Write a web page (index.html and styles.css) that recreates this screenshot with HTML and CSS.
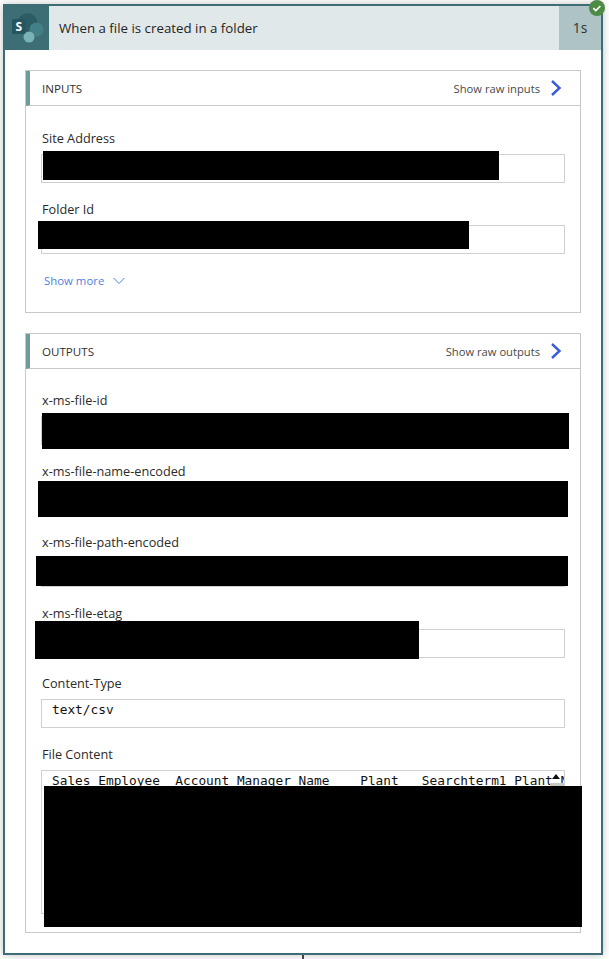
FILE: index.html
```html
<!DOCTYPE html>
<html lang="en">
<head>
<meta charset="utf-8">
<title>When a file is created in a folder</title>
<link rel="stylesheet" href="styles.css">
</head>
<body>
<main class="card">
  <header class="card-head">
    <div class="logo-box">
      <svg class="logo" width="44" height="44" viewBox="0 0 44 44">
        <circle cx="22.500" cy="17" r="10" fill="#2c5c64"/>
        <circle cx="31.500" cy="23.500" r="7" fill="#437f87"/>
        <circle cx="24" cy="31" r="5.500" fill="#79b2b9"/>
        <rect x="7" y="13" width="13.5" height="15" rx="1.5" fill="#235660"/>
        <text x="13.700" y="25" class="logo-s">S</text>
      </svg>
    </div>
    <div class="card-title">When a file is created in a folder</div>
    <div class="duration">1s</div>
  </header>
  <svg class="badge" width="18" height="18" viewBox="0 0 18 18">
    <circle cx="9" cy="8" r="8" fill="#4c8a46"/>
    <path d="M5.3 8.2l2.5 2.4 4.6-4.6" fill="none" stroke="#fff" stroke-width="1.6"/>
  </svg>
  <div class="card-body">
    <section class="panel panel-inputs">
      <div class="panel-head">
        <span class="panel-title">INPUTS</span>
        <a class="raw-link">Show raw inputs
          <svg class="raw-chevron" width="12" height="16" viewBox="0 0 12 16"><path d="M2 1l7.500 7L2 15" fill="none" stroke="#3b5bdb" stroke-width="2.400"/></svg>
        </a>
      </div>
      <div class="panel-body">
        <div class="field"><label>Site Address</label><div class="value"></div></div>
        <div class="field"><label>Folder Id</label><div class="value"></div></div>
        <a class="show-more">Show more
          <svg width="12" height="8" viewBox="0 0 12 8"><path d="M.5 1l5.5 5.5L11.500 1" fill="none" stroke="#4f7fe0" stroke-width="1"/></svg>
        </a>
      </div>
    </section>
    <section class="panel panel-outputs">
      <div class="panel-head">
        <span class="panel-title">OUTPUTS</span>
        <a class="raw-link">Show raw outputs
          <svg class="raw-chevron" width="12" height="16" viewBox="0 0 12 16"><path d="M2 1l7.500 7L2 15" fill="none" stroke="#3b5bdb" stroke-width="2.400"/></svg>
        </a>
      </div>
      <div class="panel-body">
        <div class="field"><label>x-ms-file-id</label><div class="value"></div></div>
        <div class="field"><label>x-ms-file-name-encoded</label><div class="value"></div></div>
        <div class="field"><label>x-ms-file-path-encoded</label><div class="value"></div></div>
        <div class="field field-short"><label>x-ms-file-etag</label><div class="value"></div></div>
        <div class="field"><label>Content-Type</label><div class="value mono">text/csv</div></div>
        <div class="field"><label>File Content</label>
          <div class="value mono value-tall">Sales Employee  Account Manager Name    Plant   Searchterm1 Plant Name
            <span class="scroll-thumb"></span><span class="scroll-arrow"></span>
          </div>
        </div>
      </div>
    </section>
  </div>
</main>
<div class="connector"></div>
<div class="redact r1"></div>
<div class="redact r2"></div>
<div class="redact r3"></div>
<div class="redact r4"></div>
<div class="redact r5"></div>
<div class="redact r6"></div>
<div class="redact r7"></div>
</body>
</html>
```
FILE: styles.css
```css
* { box-sizing: border-box; }
html, body { margin: 0; padding: 0; background: #fff; overflow: hidden; }
body {
  position: relative;
  width: 609px;
  height: 959px;
  font-family: "Open Sans", "Noto Sans", sans-serif;
  color: #323130;
}
.card {
  position: relative;
  margin: 4px 6px 0 3px;
  width: 600px;
  height: 951px;
  border: 2px solid #3d6e76;
  background: #fff;
  box-shadow: 0 0 8px rgba(0, 0, 0, .25);
}
.card-head {
  display: flex;
  align-items: center;
  height: 44px;
  background: #e1e8ea;
}
.logo-box { width: 44px; height: 44px; background: #3d6e76; flex: none; }
.logo { display: block; }
.logo-s { font: 700 12px "Open Sans", sans-serif; fill: #fff; text-anchor: middle; }
.card-title { flex: 1; padding-left: 10px; font-size: 13.3px; color: #252423; }
.duration {
  width: 42px;
  height: 44px;
  line-height: 44px;
  text-align: center;
  background: #adc3c6;
  font-size: 13.8px;
}
.badge { position: absolute; top: -6px; right: -5px; }
.card-body { padding: 20px 20px 0; display: flex; flex-direction: column; gap: 20px; }
.panel { border: 1px solid #c8c8c8; }
.panel-inputs { height: 243px; }
.panel-outputs { height: 600px; }
.panel-head {
  display: flex;
  align-items: center;
  justify-content: space-between;
  height: 35px;
  padding: 0 18px 0 12px;
  border-left: 4px solid #6f9a9c;
  border-bottom: 1px solid #c8c8c8;
}
.panel-title { font-size: 11.6px; color: #323130; }
.raw-link { display: flex; align-items: center; gap: 10px; font-size: 11.2px; color: #4a4a4a; }
.raw-chevron { display: block; }
.panel-body { padding: 24px 15px 0 16px; }
.panel-outputs .panel-body { padding-top: 23px; }
.field { height: 71px; }
.field-short { height: 70px; }
.field label { display: block; height: 17px; line-height: 17px; font-size: 12.7px; font-weight: 500; color: #2b2a29; }
.value {
  position: relative;
  margin-top: 7px;
  margin-left: -1px;
  height: 29px;
  border: 1px solid #d0d0d0;
  background: #fff;
  overflow: hidden;
}
.mono {
  padding: 2px 0 0 10px;
  font-family: "DejaVu Sans Mono", monospace;
  font-size: 12.8px;
  line-height: 16px;
  white-space: pre;
  color: #111;
}
.value-tall { height: 144px; }
.scroll-arrow {
  position: absolute;
  top: 3px;
  right: 4px;
  border: 4px solid transparent;
  border-top: 0;
  border-bottom: 5px solid #111;
}
.scroll-thumb {
  position: absolute;
  top: 12px;
  right: 0;
  width: 14px;
  height: 130px;
  background: #c8c8c8;
}
.show-more {
  display: flex;
  align-items: center;
  gap: 9px;
  margin: 1px 0 0 2px;
  font-size: 11.4px;
  color: #4f7fe0;
}
.connector { position: absolute; left: 302px; top: 955px; width: 2px; height: 4px; background: #444; }
.redact { position: absolute; background: #000; }
.r1 { left: 43px; top: 151px; width: 456px; height: 29px; }
.r2 { left: 38px; top: 221px; width: 431px; height: 28px; }
.r3 { left: 42px; top: 413px; width: 527px; height: 36px; }
.r4 { left: 38px; top: 481px; width: 530px; height: 36px; }
.r5 { left: 36px; top: 556px; width: 532px; height: 30px; }
.r6 { left: 35px; top: 621px; width: 384px; height: 38px; }
.r7 { left: 44px; top: 786px; width: 538px; height: 141px; }
```
